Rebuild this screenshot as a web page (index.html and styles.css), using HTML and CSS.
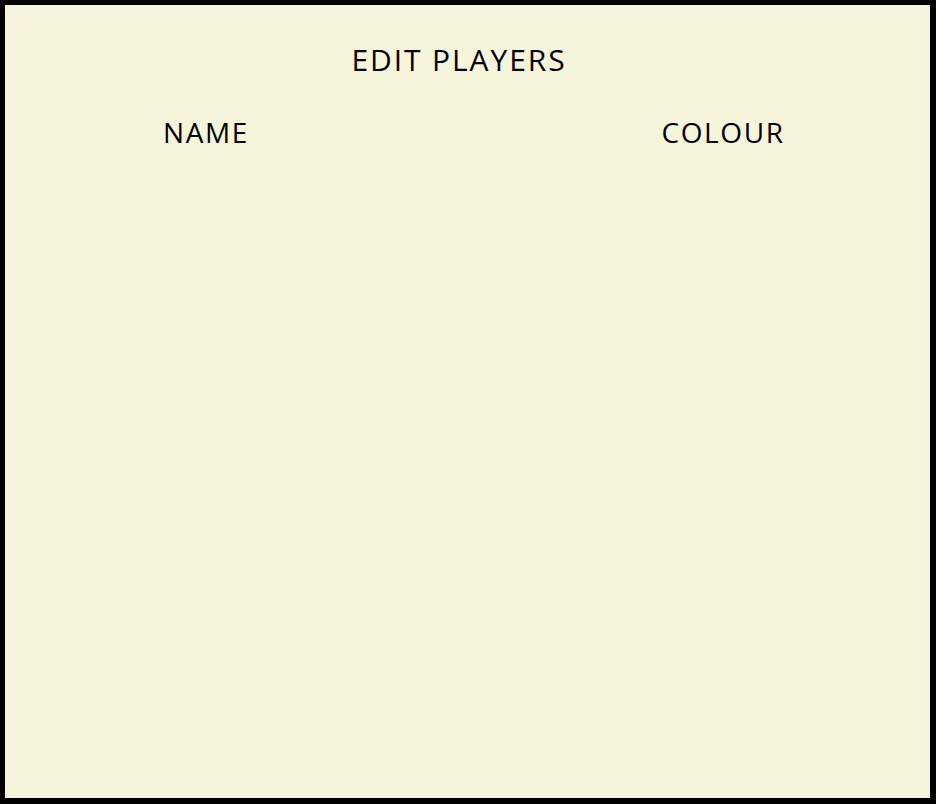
FILE: index.html
```html
<!DOCTYPE html>
<html lang="en">
<head>
<meta charset="utf-8">
<title>Edit Players</title>
<link rel="stylesheet" href="styles.css">
</head>
<body>
<main class="panel">
  <h1 class="title"><span>EDIT PLAYERS</span></h1>
  <div class="headers">
    <span class="col col-name">NAME</span>
    <span class="col col-colour">COLOUR</span>
  </div>
</main>
</body>
</html>
```

FILE: styles.css
```css
html, body {
  margin: 0;
  padding: 0;
}
body {
  width: 936px;
  height: 804px;
  font-family: "Comic Sans MS", "Open Sans", "DejaVu Sans", sans-serif;
  color: #000;
}
.panel {
  box-sizing: border-box;
  width: 936px;
  height: 804px;
  background: #f5f5dc;
  border-style: solid;
  border-color: #000;
  border-width: 5px 6px 6px 5px;
  padding-top: 40px;
}
.title {
  margin: 0;
  font-weight: normal;
  font-size: 30px;
  line-height: 1;
  letter-spacing: 1.9px;
  display: flex;
  padding-left: 304px;
}
.title span {
  width: 300px;
  text-align: center;
}
.headers {
  display: flex;
  margin-top: 43px;
  padding-left: 101px;
  gap: 317px;
  font-size: 28px;
  line-height: 1;
  letter-spacing: 1.6px;
}
.col {
  width: 200px;
  text-align: center;
}
```
